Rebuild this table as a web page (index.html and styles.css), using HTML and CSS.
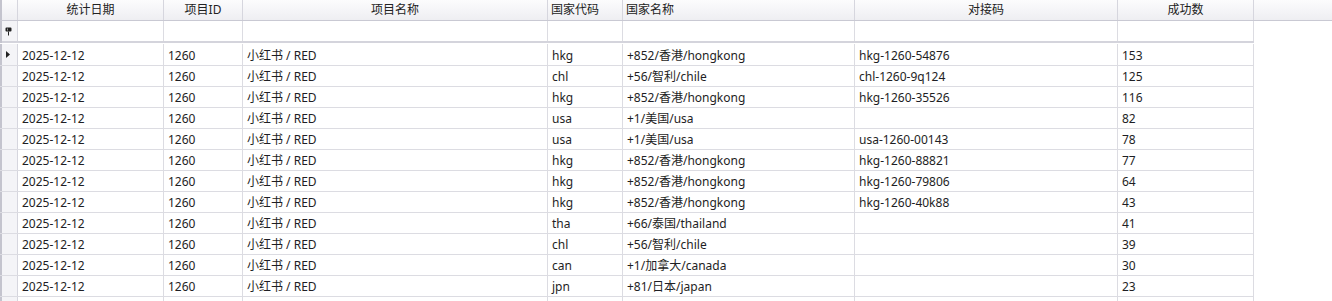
FILE: index.html
```html
<!DOCTYPE html>
<html lang="zh-CN">
<head>
<meta charset="utf-8">
<title>Grid</title>
<link rel="stylesheet" href="styles.css">
</head>
<body>
<div class="grid">
  <div class="row head">
    <div class="ind"></div>
    <div class="c center">统计日期</div>
    <div class="c center">项目ID</div>
    <div class="c center">项目名称</div>
    <div class="c">国家代码</div>
    <div class="c">国家名称</div>
    <div class="c center">对接码</div>
    <div class="c center">成功数</div>
    <div class="c fill"></div>
  </div>
  <div class="row filter">
    <div class="ind"><svg width="7" height="9" viewBox="0 0 7 9"><path d="M1.5 0.5h4a1 1 0 0 1 1 1v2a1 1 0 0 1-1 1h-4a1 1 0 0 1-1-1v-2a1 1 0 0 1 1-1z" fill="#222"/><rect x="3" y="4.5" width="1" height="4" fill="#222"/><rect x="2" y="1.5" width="1" height="2" fill="#9a9a9a"/></svg></div>
    <div class="c"></div><div class="c"></div><div class="c"></div><div class="c"></div><div class="c"></div><div class="c"></div><div class="c"></div>
  </div>
  <div class="sep"></div>
  <div class="body">
    <div class="row data first">
      <div class="ind"><svg width="4" height="7" viewBox="0 0 4 7"><path d="M0 0L4 3.5L0 7Z" fill="#222"/></svg></div>
      <div class="c">2025-12-12</div><div class="c">1260</div><div class="c">小红书 / RED</div><div class="c">hkg</div><div class="c">+852/香港/hongkong</div><div class="c">hkg-1260-54876</div><div class="c">153</div>
    </div>
    <div class="row data"><div class="ind"></div><div class="c">2025-12-12</div><div class="c">1260</div><div class="c">小红书 / RED</div><div class="c">chl</div><div class="c">+56/智利/chile</div><div class="c">chl-1260-9q124</div><div class="c">125</div></div>
    <div class="row data"><div class="ind"></div><div class="c">2025-12-12</div><div class="c">1260</div><div class="c">小红书 / RED</div><div class="c">hkg</div><div class="c">+852/香港/hongkong</div><div class="c">hkg-1260-35526</div><div class="c">116</div></div>
    <div class="row data"><div class="ind"></div><div class="c">2025-12-12</div><div class="c">1260</div><div class="c">小红书 / RED</div><div class="c">usa</div><div class="c">+1/美国/usa</div><div class="c"></div><div class="c">82</div></div>
    <div class="row data"><div class="ind"></div><div class="c">2025-12-12</div><div class="c">1260</div><div class="c">小红书 / RED</div><div class="c">usa</div><div class="c">+1/美国/usa</div><div class="c">usa-1260-00143</div><div class="c">78</div></div>
    <div class="row data"><div class="ind"></div><div class="c">2025-12-12</div><div class="c">1260</div><div class="c">小红书 / RED</div><div class="c">hkg</div><div class="c">+852/香港/hongkong</div><div class="c">hkg-1260-88821</div><div class="c">77</div></div>
    <div class="row data"><div class="ind"></div><div class="c">2025-12-12</div><div class="c">1260</div><div class="c">小红书 / RED</div><div class="c">hkg</div><div class="c">+852/香港/hongkong</div><div class="c">hkg-1260-79806</div><div class="c">64</div></div>
    <div class="row data"><div class="ind"></div><div class="c">2025-12-12</div><div class="c">1260</div><div class="c">小红书 / RED</div><div class="c">hkg</div><div class="c">+852/香港/hongkong</div><div class="c">hkg-1260-40k88</div><div class="c">43</div></div>
    <div class="row data"><div class="ind"></div><div class="c">2025-12-12</div><div class="c">1260</div><div class="c">小红书 / RED</div><div class="c">tha</div><div class="c">+66/泰国/thailand</div><div class="c"></div><div class="c">41</div></div>
    <div class="row data"><div class="ind"></div><div class="c">2025-12-12</div><div class="c">1260</div><div class="c">小红书 / RED</div><div class="c">chl</div><div class="c">+56/智利/chile</div><div class="c"></div><div class="c">39</div></div>
    <div class="row data"><div class="ind"></div><div class="c">2025-12-12</div><div class="c">1260</div><div class="c">小红书 / RED</div><div class="c">can</div><div class="c">+1/加拿大/canada</div><div class="c"></div><div class="c">30</div></div>
    <div class="row data"><div class="ind"></div><div class="c">2025-12-12</div><div class="c">1260</div><div class="c">小红书 / RED</div><div class="c">jpn</div><div class="c">+81/日本/japan</div><div class="c"></div><div class="c">23</div></div>
    <div class="row data tail"><div class="ind"></div><div class="c"></div><div class="c"></div><div class="c"></div><div class="c"></div><div class="c"></div><div class="c"></div><div class="c"></div></div>
  </div>
</div>
</body>
</html>
```

FILE: styles.css
```css
* { box-sizing: border-box; }
html, body {
  margin: 0;
  padding: 0;
  background: #ffffff;
  overflow: hidden;
}
body {
  width: 1332px;
  height: 301px;
  font-family: "Noto Sans", "Noto Sans CJK SC", sans-serif;
  font-size: 12px;
  color: #1e1e24;
}
.grid {
  width: 1332px;
  height: 301px;
  overflow: hidden;
}
.row {
  display: grid;
  grid-template-columns: 18px 146px 79px 305px 75px 232px 263px 136px;
}
.row.head {
  grid-template-columns: 18px 146px 79px 305px 75px 232px 263px 136px 1fr;
  height: 21px;
  background: linear-gradient(#fcfcfd, #eeeef2);
  border-bottom: 1px solid #c9c9d3;
}
.c {
  border-right: 1px solid #dcdce2;
  padding-left: 4px;
  white-space: nowrap;
  overflow: hidden;
  line-height: 20px;
}
.head .c {
  border-right-color: #d6d6de;
  padding-left: 3px;
  color: #222;
}
.head .c.center {
  text-align: center;
  padding-left: 0;
}
.head .c.fill {
  border-right: none;
}
.ind {
  border-left: 2px solid #c4c4ce;
  border-right: 1px solid #d6d6de;
  background: #f4f4f7;
  display: flex;
  align-items: center;
  justify-content: center;
}
.head .ind {
  background: transparent;
}
.row.filter {
  height: 20px;
}
.filter .ind svg {
  margin-left: -3px;
  margin-top: 1px;
}
.sep {
  width: 1254px;
  height: 2px;
  background: #d4d4dc;
  border-left: 2px solid #c4c4ce;
}
.body {
  width: 1254px;
  padding-top: 1px;
}
.row.data {
  height: 21px;
  border-bottom: 1px solid #dcdce2;
}
.row.data.first {
  height: 22px;
}
.data .c {
  line-height: 20px;
  padding-top: 1px;
}
.row.data.first .c {
  padding-top: 2px;
}
.data .ind svg {
  margin-left: -4px;
}
.row.data.tail {
  height: 10px;
  border-bottom: none;
}
```
